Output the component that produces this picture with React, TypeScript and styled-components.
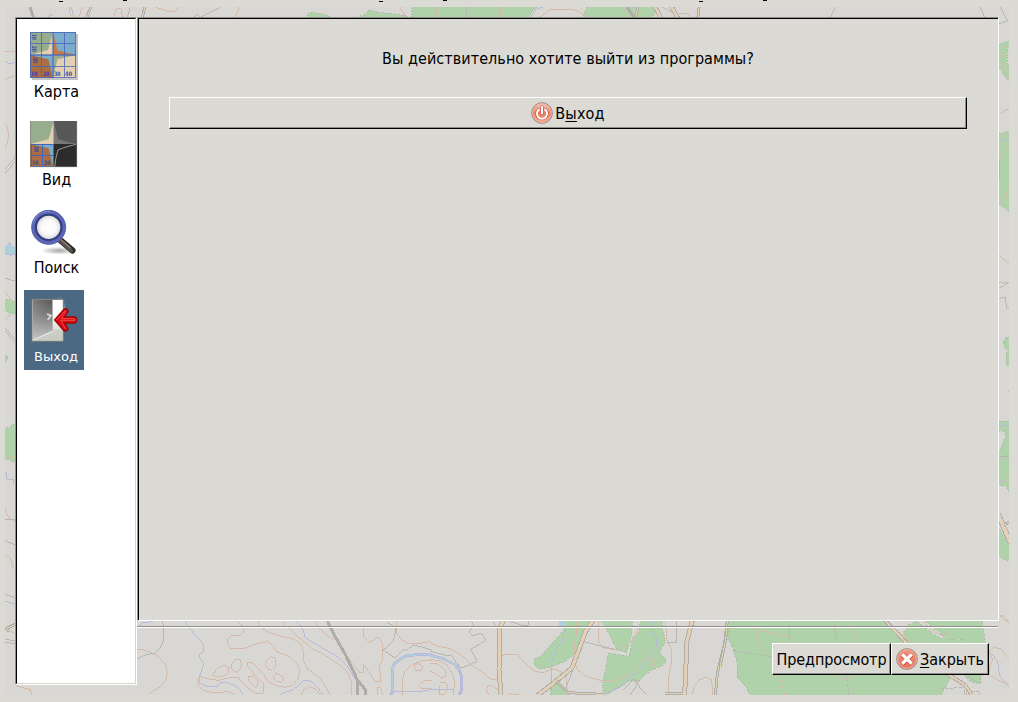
import React from "react";
import styled, { createGlobalStyle, css } from "styled-components";

const GlobalStyle = createGlobalStyle`
  * { box-sizing: border-box; }
  body {
    margin: 0;
    background: #dbdad5;
    overflow: hidden;
  }
`;

const Desktop = styled.main`
  position: relative;
  width: 1018px;
  height: 702px;
  padding: 17px 19px 17px 15px;
  display: flex;
  background: #dbdad5;
  color: #000;
  font: 16px/20px "DejaVu Sans Condensed", "DejaVu Sans", sans-serif;
  font-stretch: condensed;
`;

const MapCanvas = styled.svg`
  position: absolute;
  inset: 0;
  width: 1018px;
  height: 702px;
`;

const Sidebar = styled.nav`
  position: relative;
  flex: none;
  width: 122px;
  height: 668px;
  border: 1px solid;
  border-color: #8f8e8a #fff #fff #8f8e8a;
  display: flex;
`;

const SidebarList = styled.div`
  flex: 1;
  display: flex;
  flex-direction: column;
  align-items: flex-start;
  gap: 8px;
  padding: 7px;
  background: #fff;
  border: 1px solid;
  border-color: #000 #d5d4d0 #d5d4d0 #000;
`;

const Item = styled.button<{ $selected?: boolean }>`
  width: 60px;
  height: 80px;
  flex: none;
  border: 0;
  padding: 6px 0 0 6px;
  display: flex;
  flex-direction: column;
  align-items: flex-start;
  gap: 2px;
  background: transparent;
  font: inherit;
  color: #000;
  ${(p) =>
    p.$selected &&
    css`
      background: #4b6983;
      color: #fff;
    `}
`;

const ItemLabel = styled.span<{ $small?: boolean }>`
  width: 53px;
  height: 20px;
  display: flex;
  justify-content: center;
  white-space: nowrap;
  ${(p) =>
    p.$small &&
    css`
      width: 52px;
      font: 13px/22px "DejaVu Sans", sans-serif;
    `}
`;

const Icon = styled.svg`
  display: block;
  flex: none;
`;

const Content = styled.section`
  position: relative;
  flex: 1;
  display: flex;
  flex-direction: column;
`;

const Page = styled.div`
  height: 604px;
  background: #dbdad5;
  border: 1px solid;
  border-color: #8f8e8a #fff #fff #8f8e8a;
  display: flex;
`;

const PageBody = styled.div`
  flex: 1;
  border: solid #000;
  border-width: 1px 0 0 1px;
  padding: 30px 31px 0 30px;
  display: flex;
  flex-direction: column;
  gap: 28px;
`;

const Question = styled.p`
  margin: 0;
  text-align: center;
  letter-spacing: 0.06px;
`;

const Divider = styled.hr`
  width: calc(100% - 1px);
  height: 2px;
  margin: 5px 0 15px;
  border: 0;
  border-top: 1px solid #8f8e8a;
  background: #fff;
`;

const Actions = styled.footer`
  display: flex;
  justify-content: flex-end;
  padding-right: 10px;
`;

const Button = styled.button<{ $width?: number }>`
  width: ${(p) => (p.$width ? `${p.$width}px` : "100%")};
  height: 32px;
  padding: 0;
  display: flex;
  align-items: center;
  justify-content: center;
  gap: 2px;
  background: #dbdad5;
  border: 1px solid;
  border-color: #fff #000 #000 #fff;
  box-shadow: inset -1px -1px #8f8e8a;
  color: #000;
  font: inherit;
  white-space: nowrap;
`;

const ButtonText = styled.span<{ $spacing?: number }>`
  padding-top: 2px;
  letter-spacing: ${(p) => p.$spacing ?? 0}px;

  u {
    text-decoration-thickness: 1px;
    text-underline-offset: 2px;
    text-decoration-skip-ink: none;
  }
`;

const Contour = styled.path`
  fill: none;
  stroke: #d6b9a7;
  stroke-width: 3;
`;
const Stream = styled.path`
  fill: none;
  stroke: #b9b9dc;
  stroke-width: 3;
`;
const Track = styled.path`
  fill: none;
  stroke: #b7b6b2;
  stroke-width: 3;
`;
const Rail = styled.path`
  fill: none;
  stroke: #aeada9;
  stroke-width: 9;
`;
const Forest = styled.path`
  fill: #b0d2ab;
  stroke: #a2b69d;
  stroke-width: 3;
  stroke-dasharray: 3 5;
`;

function Road({ d, width = 15, fill = "#e5d0b5" }: { d: string; width?: number; fill?: string }) {
  return (
    <g fill="none">
      <path d={d} stroke="#b0aea8" strokeWidth={width} />
      <path d={d} stroke={fill} strokeWidth={width - 6} />
    </g>
  );
}

const S = "scale(.333333)";

function TopographicMap() {
  return (
    <MapCanvas viewBox="0 0 1018 702" shapeRendering="crispEdges" aria-hidden="true">
      <defs>
        <clipPath id="sheet">
          <rect x="5" y="7" width="1004" height="688" />
        </clipPath>
      </defs>
      <g clipPath="url(#sheet)">
        <rect x="5" y="7" width="1004" height="688" fill="#d8d7d3" />

        {/* north edge */}
        <g transform={S}>
          <Forest d="M918 54L922 46 930 37 945 38 958 42 972 42 988 48 993 54Z" />
          <Forest d="M1074 54L1080 48 1091 48 1105 31 1123 32 1135 37 1180 41 1215 47 1230 54Z" />
          <Forest d="M1236 18H1615L1609 25 1597 30 1589 46 1580 58H1236Z" />
          <Rail d="M90 20L101 55" />
          <Contour d="M207 21L212 52M248 21L235 54M341 51L350 26H364L367 52M469 22L505 35H523L537 21M720 21L703 53M1200 21L1218 53M1310 21L1308 53M1501 20V53" />
          <Stream d="M214 20L221 52" />
          <Track d="M145 49L153 43 160 49M391 20L382 53M580 52L590 43 600 50M604 50L660 22M1399 18V54M2506 20L2491 54M2940 20L2955 54M3000 20L3023 62 2998 72" />
          <Road d="M273 18L260 55M435 18L427 55" width={9} />
        </g>
        <g transform="translate(509 0) scale(.333333)">
          <Forest d="M222 55L227 34 236 18H430L440 35 435 45 423 55Z" />
          <Contour d="M94 51L125 28H184L201 31 225 43 243 55M336 20L371 53M457 20L487 36M510 39L537 42 547 51" />
          <Rail d="M352 18L378 56" />
          <Road d="M387 18L380 55M571 18L566 55" width={9} />
          <Road d="M438 20L457 55M486 18L507 55" width={14} />
          <Stream d="M65 50L82 28 104 20" />
        </g>

        {/* west edge */}
        <g transform={S}>
          <Contour d="M12 154H47M12 239L47 226M12 372C30 370 28 440 12 445" />
          <Stream d="M12 183L30 192 47 186" />
          <Track d="M12 523L47 484M12 512L47 470" />
        </g>
        <g transform="translate(0 200) scale(.333333)">
          <path d="M12 142L22 138 29 126 33 136 48 146V162L34 166 12 160Z" fill="#b0cfdc" stroke="#b9b9dc" strokeWidth="3" />
          <Track d="M12 234L47 244M12 390L47 429M12 382L47 418" />
          <Contour d="M12 274L38 302M12 364L46 331" />
          <Forest d="M12 298L30 300 48 308V340H30L12 330ZM12 463L22 465 24 478 12 494Z" />
        </g>
        <g transform="translate(0 370) scale(.333333)">
          <Forest d="M12 174H28L48 155V278L12 265Z" />
          <Contour d="M12 255L48 266M14 414L27 445 48 454M14 552L32 565 38 590 48 600M14 776L48 792M48 946L92 960 95 976" />
          <Stream d="M12 308H20V328H42V342M12 692L48 704" />
          <Track d="M12 448H48M12 511L48 525M12 672L48 684M12 808L48 812M12 816L48 821" />
          <Road d="M48 762L18 776 28 784" width={9} />
        </g>

        {/* south-west hills */}
        <g transform="translate(130 600) scale(.333333)">
          <Contour d="M20 150H42L70 160 91 175 107 196 112 218 108 239 92 260 68 274 52 286M322 64L340 80V98L329 106H305L293 119V132L302 147H338L384 130 411 125 427 134 440 155 475 168 501 190 509 210 505 235 490 255 466 262 438 257 415 245 397 219 371 190 353 187V199L371 220 400 250V280H378L348 260 326 234 302 232 266 241 230 236 211 229 203 238 205 256 219 270 249 279 294 275 317 286" />
          <Contour d="M384 64L390 80 412 95 449 108 494 118 514 136 522 158V187L532 207 571 235 602 286M455 64L494 102 545 145 580 162 631 196 655 222 665 250V286M556 64L565 83 598 112 618 120 640 152 663 185 691 219H700V192L711 207 735 244 752 246V229L747 200 758 178V132L744 110 731 120 718 127 701 110V80M742 284V264H752L758 286M799 60V98L814 118 833 130H870L900 124M817 286V241L824 215 845 194 874 183 905 180M512 286L520 270 537 260 556 267 575 286M728 84H752" />
          <Contour d="M248 224L264 203 283 196 296 203 294 218 279 229H255ZM304 194L314 179H330L335 195 328 213 318 217 305 207ZM410 180L422 170 435 174 436 200 427 211 414 207 406 193ZM430 231L438 220 449 223 461 234 454 247 438 244ZM354 229L370 230 385 243 382 259 371 258 357 244ZM853 195L865 190 878 200 875 212H858L853 203ZM866 257L881 243H905M866 257L875 267H905" />
          <Stream d="M22 83L36 68 70 65M165 64L180 88 209 119 221 134V154L210 161 209 173 221 190 216 208 208 230 209 248 232 261H260L271 248H294L326 264 340 286M449 283L486 270 503 260 520 241H539L560 260 582 286M499 64L517 84 526 113 560 134 626 172 651 199 680 244" />
          <Track d="M97 64L102 84V115L92 142 75 159 48 164 22 176M760 150L790 123 798 83 770 66M760 150L795 174 820 149 830 151 848 136 872 140 905 151" />
          <Rail d="M591 60L610 100 644 160 683 241V286M683 240L706 270V286" />
          <path d="M782 286L789 272 787 208 792 192 816 174 833 166 905 162" fill="none" stroke="#b9b9dc" strokeWidth="9" />
          <path d="M789 272L787 208 792 192 816 174 833 166 905 162" fill="none" stroke="#b0cfdc" strokeWidth="4" />
          <Stream d="M790 274H872L905 269" />
        </g>

        {/* southern valley */}
        <g transform="translate(430 600) scale(.333333)">
          <Forest d="M410 60H490L472 94 445 146 429 166 403 185 360 201 330 208 313 195V178L336 165 385 109 402 91Z" />
          <Forest d="M510 60H608L604 108 590 158 561 150 545 120 529 85ZM632 60H698L696 80 705 118 703 132 688 157 707 178V188L689 202 661 211 627 244 600 242 543 278 518 286V252L535 160 597 168 609 112 625 102Z" />
          <Forest d="M362 260L384 250 412 274 421 286H362ZM894 60V120L905 122" />
          <rect x="387" y="62" width="22" height="22" fill="#b0cfdc" />
          <Contour d="M0 127L20 138 62 146 102 171 124 195 160 218 186 240H200L208 231M216 166L230 163H261L283 187 309 211 337 219 360 210H380L399 218 409 236V286M439 60V105L432 140 439 206 467 228 514 242H548L592 228 631 185 657 167 666 174 667 200M706 64L711 120 724 150V190L715 235V286M786 286L792 260 808 240 829 231 845 240 848 286M506 64V128L518 143 566 151 600 130 616 109 623 85M205 270L185 257H174L169 269 177 286M233 284L243 281 266 285M0 178L30 183 51 195 68 221 73 246 71 286M0 190H20L45 210 47 229 33 234 14 218 0 214M31 249H49L54 264 43 284H28V258" />
          <Track d="M125 64L131 75 118 95 127 107 155 100 167 121 122 148 142 184 92 205 65 166 45 165 0 154M241 65L277 76 295 76V60M187 65L198 76M409 280V258L422 230 429 204M461 125L503 136 555 148M739 60V128H710M580 270L609 240 650 284M600 286L627 246 605 236" />
          <Stream d="M407 85L397 120 377 154 364 190V286M661 60L665 93 680 122V141L660 174 627 210 572 258 521 286M0 268H68" />
          <path d="M0 166L40 176 74 193 88 209 95 232 94 270 88 286" fill="none" stroke="#b9b9dc" strokeWidth="9" />
          <path d="M0 166L40 176 74 193 88 209" fill="none" stroke="#b0cfdc" strokeWidth="4" />
          <Road d="M222 60L209 83 207 210 213 286M490 60L467 94 448 145 426 204 380 242 323 286M787 60L771 123 764 286" />
          <Road d="M380 242L414 278 518 283M704 280H760" width={9} />
          <Road d="M892 60L884 130 862 220 856 286" width={9} fill="#d9d7a9" />
        </g>

        {/* south-east forest */}
        <g transform="translate(720 600) scale(.333333)">
          <Forest d="M24 60H494L548 106 567 73 590 63 620 87 661 115 719 119 735 110 743 119 760 120V150H780L781 252L760 248 739 234 720 210 690 235 664 286H91L78 261 52 232 51 186 40 151 24 110Z" />
          <Forest d="M612 60H786L796 130 780 252 750 235 730 200 735 118H683L648 91Z" />
          <Contour d="M102 83L118 126 160 180 195 286M102 83L135 95 210 110 228 131M390 76L412 125 440 150M340 222L372 240 410 225M550 94L560 120 582 121V85L590 70M608 64L635 90 665 106 685 100 690 84M834 43L867 68M867 174L840 145 820 143 808 156 818 180 809 199V225L842 245 867 253" />
          <Stream d="M815 160L833 183 839 227 867 262" />
          <Track d="M209 60L210 126M340 60L350 126M40 152L155 170M378 225L388 286M664 266L735 262V284M741 286V274H780V286" strokeDasharray="9 4" />
          <Road d="M494 60L560 130M680 220L735 255 756 286" width={12} />
          <Road d="M22 60L17 120 0 200" width={9} fill="#d9d7a9" />
        </g>

        {/* east edge */}
        <g transform="translate(930 0) scale(.333333)">
          <Forest d="M206 134L240 122V138L232 155 231 185 240 205V248L222 226 206 200ZM206 402L240 391V638L206 612ZM240 1010L228 1012 220 1028 226 1046 240 1056Z" />
          <Contour d="M240 125L222 145 215 180 220 210 240 240M206 345L230 328H240M206 412L240 394M240 436L214 462 206 485M240 555L225 596 206 605M206 766L240 793M206 847H240" />
          <Stream d="M206 430L220 419H240" />
          <Track d="M208 478V540M206 865L240 845M206 895L226 892 230 925H240M206 835V840" />
        </g>
        <g transform="translate(930 350) scale(.333333)">
          <Forest d="M240 0H230L228 40 240 54ZM206 214H240V430L228 408H206V306L228 260 224 244H206ZM206 535L240 580V636L206 620Z" />
          <Contour d="M240 380L222 395 240 405M206 797L220 798 240 820" />
          <Stream d="M206 227H240M206 395L228 389" />
          <Track d="M206 318L240 320M234 125H240" />
          <Road d="M203 490L242 580" width={17} />
          <Road d="M222 525L242 513" width={9} />
        </g>
      </g>
      <path
        d="M59 1h4v1h-4zM123 0h4v1h-4zM379 1h4v1h-4zM443 0h4v1h-4zM699 1h4v1h-4zM763 0h4v1h-4z"
        fill="#000"
      />
    </MapCanvas>
  );
}

const GridText = styled.text.attrs({ lengthAdjust: "spacingAndGlyphs" })`
  font: bold 18px "DejaVu Serif", serif;
  fill: #2c3fae;
`;

function MapIcon() {
  return (
    <Icon width="48" height="48" viewBox="0 0 144 144">
      <path d="M6 6H144V144H6Z" fill="#55555a" opacity=".35" />
      <path d="M0 0H69V69H0Z" fill="#98ad8d" />
      <path d="M69 0H138V69H69Z" fill="#7aaccc" />
      <path d="M0 69H69V138H0Z" fill="#a96f42" />
      <path d="M69 69H138V138H69Z" fill="#e3d0b1" />
      <path d="M69 0L54 54 0 69H69Z" fill="#e3d0b1" />
      <path d="M69 0L82 55 138 69H69Z" fill="#c57a46" />
      <path d="M0 69L55 82 69 138V69Z" fill="#7aaccc" />
      <path d="M138 69L82 82 69 138V69Z" fill="#98ad8d" />
      <path
        d="M1.500 1.500H136.500V136.500H1.500ZM34.500 0V138M103.500 0V138M0 34.500H138M0 103.500H138"
        fill="none"
        stroke="#4764bd"
        strokeWidth="3"
        opacity=".8"
        shapeRendering="crispEdges"
      />
      <path d="M69 0V138M0 69H138" stroke="#4764bd" strokeWidth="4" opacity=".85" />
      <GridText x="2" y="132" textLength="20">10</GridText>
      <GridText x="38" y="132" textLength="20">20</GridText>
      <GridText x="71" y="132" textLength="20">30</GridText>
      <GridText x="105" y="132" textLength="21">40</GridText>
      <GridText transform="translate(5 5) rotate(90)" textLength="19">10</GridText>
      <GridText transform="translate(5 41) rotate(90)" textLength="19">20</GridText>
      <GridText transform="translate(8 75) rotate(90)" textLength="18">30</GridText>
    </Icon>
  );
}

function ViewIcon() {
  return (
    <Icon width="48" height="48" viewBox="0 -3 144 144">
      <path d="M0 0H71V69H0Z" fill="#98ad8d" />
      <path d="M71 0H141V69H71Z" fill="#585858" />
      <path d="M0 69H71V138H0Z" fill="#a96f42" />
      <path d="M71 69H141V138H71Z" fill="#2c2c2c" />
      <path d="M71 0L56 54 2 69H71Z" fill="#e3d0b1" />
      <path d="M71 0L84 55 138 69H71Z" fill="#777" />
      <path d="M2 69L56 82 70 138V69Z" fill="#7aaccc" />
      <path d="M74 138L78 110 84 87 101 80 138 70" stroke="#999" strokeWidth="3" fill="none" />
      <path
        d="M4.500 70.500H70.500V136.500H4.500ZM37.500 70V137M3 103.500H70"
        fill="none"
        stroke="#4764bd"
        strokeWidth="3"
      />
      <path d="M1 1V137H140V1" stroke="#777" strokeWidth="2" fill="none" />
      <GridText x="5" y="132" textLength="20">10</GridText>
      <GridText x="41" y="132" textLength="20">20</GridText>
      <GridText transform="translate(11 75) rotate(90)" textLength="18">30</GridText>
    </Icon>
  );
}

function SearchIcon() {
  return (
    <Icon width="48" height="48" viewBox="0 -3 144 144">
      <defs>
        <radialGradient id="glass">
          <stop offset="0" stopColor="#fff" />
          <stop offset=".55" stopColor="#f8f8f8" />
          <stop offset=".9" stopColor="#d4d4d4" />
        </radialGradient>
        <radialGradient id="shade">
          <stop offset="0" stopColor="#777" stopOpacity=".65" />
          <stop offset="1" stopColor="#777" stopOpacity="0" />
        </radialGradient>
      </defs>
      <ellipse cx="87" cy="125" rx="54" ry="12" fill="url(#shade)" />
      <path d="M88 91L127 124" stroke="#292725" strokeWidth="19" strokeLinecap="round" />
      <path d="M87 93L124 125" stroke="#5b544c" strokeWidth="11" strokeLinecap="round" />
      <path d="M92 91L122 117" stroke="#8f877c" strokeWidth="4" />
      <circle cx="56" cy="55" r="42" fill="url(#glass)" stroke="#2f417f" strokeWidth="14" />
      <circle cx="56" cy="55" r="46" fill="none" stroke="#6262b9" strokeWidth="9" />
      <circle cx="56" cy="55" r="51" fill="none" stroke="#3f63a6" strokeWidth="3" />
      <path d="M9 43C18 13 41 5 61 9" fill="none" stroke="#8b8bd0" strokeWidth="3" />
    </Icon>
  );
}

function DoorIcon() {
  return (
    <Icon width="48" height="48" viewBox="-1 -5 144 144">
      <defs>
        <linearGradient id="door" x1="0" x2="1">
          <stop offset="0" stopColor="#aaa" />
          <stop offset="1" stopColor="#484848" />
        </linearGradient>
        <linearGradient id="leaf" x1=".3" y1="0" x2=".5" y2="1">
          <stop offset="0" stopColor="#555" stopOpacity=".5" />
          <stop offset="1" stopColor="#ddd" stopOpacity=".8" />
        </linearGradient>
        <radialGradient id="glow">
          <stop offset=".5" stopColor="#fff" stopOpacity=".5" />
          <stop offset="1" stopColor="#fff" stopOpacity="0" />
        </radialGradient>
        <linearGradient id="room" x1="0" y1="0" x2="0" y2="1">
          <stop offset=".3" stopColor="#fff" />
          <stop offset="1" stopColor="#c6c8c0" />
        </linearGradient>
      </defs>
      <ellipse cx="88" cy="42" rx="20" ry="46" fill="url(#glow)" />
      <path d="M5 5H99V131H5Z" fill="url(#room)" stroke="#777870" strokeWidth="3" />
      <path d="M7 128L66 97 97 94V129Z" fill="#c8cac3" opacity=".7" />
      <path d="M7 7H66V97L7 128Z" fill="url(#door)" />
      <path d="M7 7H66V97L7 128Z" fill="url(#leaf)" />
      <path d="M7 128L66 101" stroke="#eee" strokeWidth="3" />
      <path d="M50 49L62 54 52 66" fill="none" stroke="#ddd" strokeWidth="5" />
      <path
        d="M73 67L101 35Q106 31 111 36 115 41 110 47L101 58H133Q139 60 140 67 139 74 133 76H102L111 89Q115 95 109 99 104 102 99 97Z"
        fill="#d90b12"
        stroke="#a40000"
        strokeWidth="4"
      />
      <path d="M79 67L103 40 107 41 93 63H133L135 68H91L106 94" fill="none" stroke="#f34a4a" strokeWidth="3" />
    </Icon>
  );
}

function RoundIcon({ kind }: { kind: "power" | "close" }) {
  return (
    <Icon width="22" height="22" viewBox="0 0 66 66">
      <defs>
        <linearGradient id={`red-${kind}`} x1="0" y1="0" x2="0" y2="1">
          <stop offset="0" stopColor={kind === "power" ? "#f6cabf" : "#ee9a88"} />
          <stop offset=".5" stopColor="#e9806a" />
          <stop offset="1" stopColor={kind === "power" ? "#f5ab95" : "#e9745f"} />
        </linearGradient>
      </defs>
      <circle cx="33" cy="33" r="31" fill={`url(#red-${kind})`} stroke="#97847e" strokeWidth="3" />
      <circle cx="33" cy="33" r="28" fill="none" stroke="#f3b5a6" strokeWidth="3" />
      {kind === "power" ? (
        <g fill="none" strokeLinecap="round">
          <path d="M24 23A15 15 0 1 0 42 23M33 14V34" stroke="#c64b36" strokeWidth="9" />
          <path d="M24 23A15 15 0 1 0 42 23M33 14V34" stroke="#fff" strokeWidth="6" />
        </g>
      ) : (
        <g fill="none">
          <path d="M20 20L47 47M47 20L20 47" stroke="#c04c39" strokeWidth="13" />
          <path d="M19 19L47 47M47 19L19 47" stroke="#fff" strokeWidth="10" />
        </g>
      )}
    </Icon>
  );
}

export default function App() {
  return (
    <>
      <GlobalStyle />
      <Desktop>
        <TopographicMap />
        <Sidebar>
          <SidebarList>
            <Item>
              <MapIcon />
              <ItemLabel>Карта</ItemLabel>
            </Item>
            <Item>
              <ViewIcon />
              <ItemLabel>Вид</ItemLabel>
            </Item>
            <Item>
              <SearchIcon />
              <ItemLabel>Поиск</ItemLabel>
            </Item>
            <Item $selected>
              <DoorIcon />
              <ItemLabel $small>Выход</ItemLabel>
            </Item>
          </SidebarList>
        </Sidebar>
        <Content>
          <Page>
            <PageBody>
              <Question>Вы действительно хотите выйти из программы?</Question>
              <Button>
                <RoundIcon kind="power" />
                <ButtonText $spacing={0.2}>
                  В<u>ы</u>ход
                </ButtonText>
              </Button>
            </PageBody>
          </Page>
          <Divider />
          <Actions>
            <Button $width={119}>
              <ButtonText $spacing={-0.12}>Предпросмотр</ButtonText>
            </Button>
            <Button $width={98}>
              <RoundIcon kind="close" />
              <ButtonText>
                <u>З</u>акрыть
              </ButtonText>
            </Button>
          </Actions>
        </Content>
      </Desktop>
    </>
  );
}
